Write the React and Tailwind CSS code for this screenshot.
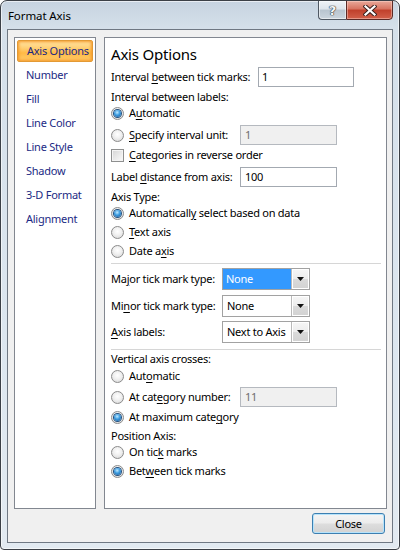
import React from "react";

const U = ({ children }) => <span className="underline underline-offset-[2px] decoration-[1px]">{children}</span>;

function Radio({ checked }) {
  return (
    <span className="w-[13px] h-[13px] rounded-full border border-[#8b8b8b] bg-[radial-gradient(circle_at_50%_40%,#ffffff_0%,#f0f0f0_45%,#d2d2d2_100%)] flex items-center justify-center shrink-0">
      {checked && (
        <span className="w-[7px] h-[7px] rounded-full bg-[radial-gradient(circle_at_45%_35%,#bfe9ff_0%,#3a9be0_45%,#1a5592_100%)] shadow-[0_0_0_1px_#24507e]" />
      )}
    </span>
  );
}

function RadioRow({ checked, children, className }) {
  return (
    <div className={className}>
      <Radio checked={checked} />
      <span className="whitespace-nowrap">{children}</span>
    </div>
  );
}

function DropButton() {
  return (
    <div className="w-[18px] h-full border-l border-[#b9b9b9] bg-[linear-gradient(180deg,#f6f6f6_0%,#ececec_50%,#dadada_51%,#d2d2d2_100%)] shadow-[inset_0_0_0_1px_#ffffff] flex items-center justify-center">
      <svg width="7" height="4" viewBox="0 0 7 4">
        <path d="M0 0H7L3.5 4Z" fill="#111" />
      </svg>
    </div>
  );
}

export default function App() {
  const nav = ["Number", "Fill", "Line Color", "Line Style", "Shadow", "3-D Format", "Alignment"];
  return (
    <div className="w-[400px] h-[550px] flex flex-col bg-[linear-gradient(180deg,#c6d3e0_0%,#d5e0ea_5%,#dce6ef_60%,#e2eaf1_100%)] border border-[#3b4047] rounded-t-[7px] rounded-b-[4px] shadow-[inset_0_0_0_1px_rgba(255,255,255,0.6)] font-['Noto_Sans',sans-serif] text-[11px] tracking-[-0.25px] leading-[14px] text-black overflow-hidden">
      {/* title bar */}
      <div className="h-[28px] flex justify-between items-start shrink-0">
        <div className="pl-[7px] pt-[7px] text-[11.5px] tracking-[-0.1px] leading-[15px] text-[#000]">Format Axis</div>
        <div className="flex mr-[6px] mt-[-1px]">
          <div className="w-[28px] h-[20px] rounded-bl-[4px] border border-[#4f5863] border-r-0 bg-[linear-gradient(180deg,#eef2f6_0%,#dde4eb_45%,#b8c4cf_50%,#cbd5de_100%)] shadow-[inset_0_0_0_1px_rgba(255,255,255,0.5)] flex items-center justify-center">
            <span className="font-['DejaVu_Sans',sans-serif] font-bold text-[13px] leading-[13px] text-[#f4f6f8] [text-shadow:0_0_1px_#2a2f36,0_0_1px_#2a2f36,0_0_1px_#2a2f36]">?</span>
          </div>
          <div className="w-[47px] h-[20px] rounded-br-[4px] border border-[#5a2a26] bg-[linear-gradient(180deg,#e9a99a_0%,#d7725f_45%,#c0402b_50%,#d2604a_100%)] shadow-[inset_0_0_0_1px_rgba(255,220,210,0.45)] flex items-center justify-center">
            <svg width="14" height="11" viewBox="0 0 14 11">
              <path d="M2.5 1.5L11.5 9.5M11.5 1.5L2.5 9.5" stroke="#3b2320" strokeWidth="4.2" strokeLinecap="square" />
              <path d="M2.5 1.5L11.5 9.5M11.5 1.5L2.5 9.5" stroke="#ffffff" strokeWidth="2.2" strokeLinecap="square" />
            </svg>
          </div>
        </div>
      </div>

      {/* client */}
      <div className="mx-[6px] h-[514px] border border-[#6f7883] bg-[#f0f0f0] flex flex-col">
        <div className="flex pt-[7px] pl-[6px] pr-[5px] gap-[8px]">
          {/* nav */}
          <div className="w-[82px] h-[472px] border border-[#828790] bg-white pt-[1px] px-[2px] flex flex-col shrink-0">
            <div className="h-[24px] py-[1px]">
              <div className="h-[22px] rounded-[2px] border border-[#e39a35] bg-[linear-gradient(180deg,#ffe6a6_0%,#ffcf74_35%,#ffba45_60%,#ffcd6c_100%)] shadow-[inset_0_0_3px_1px_#f5982a] flex items-center pl-[9px] text-[#1b2a84] whitespace-nowrap">
                Axis Options
              </div>
            </div>
            {nav.map((n) => (
              <div key={n} className="h-[24px] flex items-center pl-[9px] text-[#1b2a84] whitespace-nowrap">
                {n}
              </div>
            ))}
          </div>

          {/* panel */}
          <div className="w-[283px] h-[472px] border border-[#828790] bg-white pl-[6px] flex flex-col">
            <div className="mt-[6px] h-[20px] flex items-center text-[15px] tracking-[-0.2px] leading-[20px]">Axis Options</div>

            <div className="mt-[3px] h-[20px] flex items-center">
              <span className="w-[147px] shrink-0 whitespace-nowrap">Interval <U>b</U>etween tick marks:</span>
              <div className="w-[96px] h-[20px] border border-[#a3a9b1] bg-white pl-[3px] flex items-center">1</div>
            </div>

            <div className="mt-[1px] h-[17px] flex items-center">Interval between labels:</div>
            <RadioRow checked className="h-[16px] flex items-center gap-[5px]">
              A<U>u</U>tomatic
            </RadioRow>
            <div className="mt-[4px] h-[20px] flex items-center">
              <Radio />
              <span className="ml-[5px] w-[111px] shrink-0 whitespace-nowrap"><U>S</U>pecify interval unit:</span>
              <div className="w-[97px] h-[20px] border border-[#b5b9bf] bg-[#f0f0f0] pl-[4px] flex items-center text-[#6d6d6d]">1</div>
            </div>
            <div className="mt-[2px] h-[16px] flex items-center gap-[5px]">
              <span className="w-[13px] h-[13px] border border-[#8e8f8f] bg-[linear-gradient(135deg,#d4d4d4_0%,#ececec_60%,#fafafa_100%)] shadow-[inset_0_0_0_1px_#f4f4f4] shrink-0" />
              <span className="whitespace-nowrap"><U>C</U>ategories in reverse order</span>
            </div>
            <div className="mt-[4px] h-[20px] flex items-center">
              <span className="w-[129px] shrink-0 whitespace-nowrap">Label <U>d</U>istance from axis:</span>
              <div className="w-[97px] h-[20px] border border-[#a3a9b1] bg-white pl-[4px] flex items-center">100</div>
            </div>
            <div className="mt-[2px] h-[16px] flex items-center">Axis Type:</div>
            <RadioRow checked className="h-[16px] flex items-center gap-[5px]">
              Automaticall<U>y</U> select based on data
            </RadioRow>
            <RadioRow className="mt-[3px] h-[16px] flex items-center gap-[5px]">
              <U>T</U>ext axis
            </RadioRow>
            <RadioRow className="mt-[3px] h-[16px] flex items-center gap-[5px]">
              Date a<U>x</U>is
            </RadioRow>

            <div className="mt-[4px] h-px bg-[#d6d6d6] mr-[5px]" />

            <div className="mt-[4px] h-[22px] flex items-center">
              <span className="w-[111px] shrink-0 whitespace-nowrap">Ma<U>j</U>or tick mark type:</span>
              <div className="w-[88px] h-[22px] border border-[#a2a2a2] bg-white flex">
                <div className="flex-1 bg-[#3399ff] text-white pl-[3px] flex items-center">None</div>
                <DropButton />
              </div>
            </div>
            <div className="mt-[5px] h-[22px] flex items-center">
              <span className="w-[111px] shrink-0 whitespace-nowrap">Mi<U>n</U>or tick mark type:</span>
              <div className="w-[88px] h-[22px] border border-[#a2a2a2] bg-white flex">
                <div className="flex-1 pl-[4px] flex items-center">None</div>
                <DropButton />
              </div>
            </div>
            <div className="mt-[4px] h-[22px] flex items-center">
              <span className="w-[111px] shrink-0 whitespace-nowrap"><U>A</U>xis labels:</span>
              <div className="w-[88px] h-[22px] border border-[#a2a2a2] bg-white flex">
                <div className="flex-1 pl-[4px] flex items-center whitespace-nowrap overflow-hidden">Next to Axis</div>
                <DropButton />
              </div>
            </div>

            <div className="mt-[6px] h-px bg-[#d6d6d6] mr-[5px]" />

            <div className="mt-[1px] h-[16px] flex items-center">Vertical axis crosses:</div>
            <RadioRow className="mt-[1px] h-[16px] flex items-center gap-[5px]">
              Aut<U>o</U>matic
            </RadioRow>
            <div className="mt-[3px] h-[20px] flex items-center">
              <Radio />
              <span className="ml-[5px] w-[111px] shrink-0 whitespace-nowrap">At cat<U>e</U>gory number:</span>
              <div className="w-[97px] h-[20px] border border-[#b5b9bf] bg-[#f0f0f0] pl-[4px] flex items-center text-[#6d6d6d]">11</div>
            </div>
            <RadioRow checked className="mt-[2px] h-[16px] flex items-center gap-[5px]">
              At maximum cate<U>g</U>ory
            </RadioRow>
            <div className="mt-[3px] h-[16px] flex items-center">Position Axis:</div>
            <RadioRow className="h-[16px] flex items-center gap-[5px]">
              On tic<U>k</U> marks
            </RadioRow>
            <RadioRow checked className="mt-[3px] h-[16px] flex items-center gap-[5px]">
              Bet<U>w</U>een tick marks
            </RadioRow>
          </div>
        </div>

        <div className="flex justify-end pr-[7px] mt-[4px]">
          <div className="w-[73px] h-[21px] rounded-[3px] border border-[#3c7fb1] bg-[linear-gradient(180deg,#f4f4f4_0%,#ececec_48%,#dddddd_52%,#d2d2d2_100%)] shadow-[inset_0_0_0_1px_#b6e3fb] flex items-center justify-center">
            Close
          </div>
        </div>
      </div>
    </div>
  );
}
